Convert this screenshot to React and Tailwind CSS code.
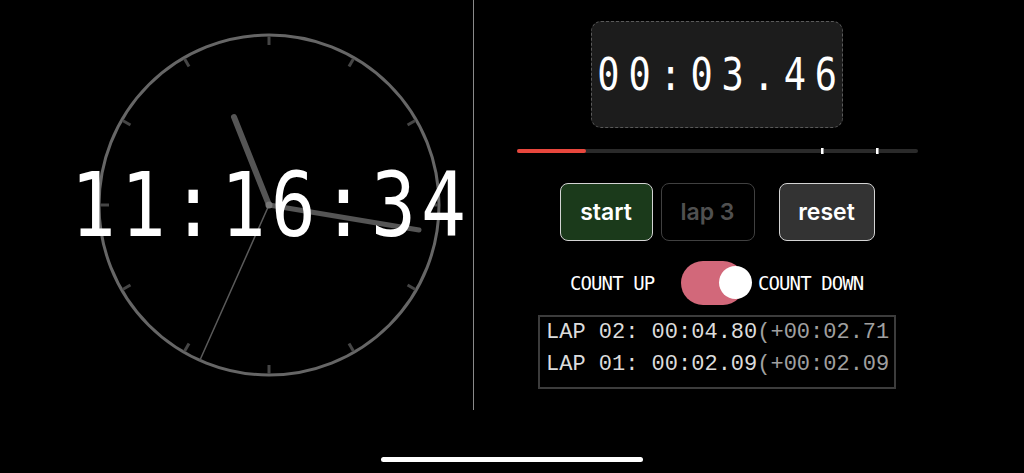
import React from "react";

function Clock() {
  const c = 172;
  const ticks = [];
  for (let i = 0; i < 12; i++) {
    const a = (i * 30 * Math.PI) / 180;
    ticks.push(
      <line
        key={i}
        x1={c + Math.sin(a) * 160}
        y1={c - Math.cos(a) * 160}
        x2={c + Math.sin(a) * 169}
        y2={c - Math.cos(a) * 169}
        stroke="#454545"
        strokeWidth="3"
      />
    );
  }
  return (
    <svg width="344" height="344" viewBox="0 0 344 344" className="col-start-1 row-start-1">
      <circle cx={c} cy={c} r="170" fill="none" stroke="#666" strokeWidth="3" />
      {ticks}
      <line x1={c} y1={c} x2={c - 35} y2={c - 88} stroke="#555" strokeWidth="6" strokeLinecap="round" />
      <line x1={c} y1={c} x2={c + 150} y2={c + 25} stroke="#555" strokeWidth="5" strokeLinecap="round" />
      <line x1={c} y1={c} x2={c - 69} y2={c + 155} stroke="#5a5a5a" strokeWidth="1.5" strokeLinecap="round" />
      <circle cx={c} cy={c} r="3.5" fill="#777" />
    </svg>
  );
}

export default function App() {
  const mono = { fontFamily: '"DejaVu Sans Mono", monospace' };
  return (
    <div className="relative w-[1024px] h-[473px] bg-black overflow-hidden flex">
      <div className="w-[474px] h-[410px] border-r border-[#8a8a8a] pl-[64px] flex items-center justify-center">
        <div className="grid place-items-center">
          <Clock />
          <div
            className="col-start-1 row-start-1 text-white text-[89px] leading-none tracking-[6px] pl-[6px] scale-x-[0.84] whitespace-nowrap"
            style={mono}
          >
            11:16:34
          </div>
        </div>
      </div>

      <div className="flex-1 pr-[64px] flex flex-col items-center">
        <div className="mt-[21px] w-[252px] h-[107px] rounded-[10px] border border-dashed border-[#5a5a5a] bg-[#1c1c1c] flex items-center justify-center">
          <div
            className="text-white text-[44px] leading-none tracking-[10.5px] pl-[10.5px] scale-x-[0.84] whitespace-nowrap"
            style={mono}
          >
            00:03.46
          </div>
        </div>

        <div className="relative mt-[21px] w-[401px] h-[4px] rounded-full bg-[#2a2a2a]">
          <div className="h-full w-[69px] rounded-full bg-[#e8473d]" />
          <div className="absolute left-[304px] top-[-1px] w-[3px] h-[6px] bg-white border-r border-[#999]" />
          <div className="absolute left-[359px] top-[-1px] w-[3px] h-[6px] bg-white border-r border-[#999]" />
        </div>

        <div className="mt-[30px] flex items-center" style={{ fontFamily: "Inter, sans-serif" }}>
          <button className="w-[93px] h-[58px] rounded-[8px] border-[1.5px] border-[#d4d4d4] bg-[#1b3a1b] text-white text-[23px] font-semibold">
            start
          </button>
          <button className="ml-[8px] w-[94px] h-[58px] rounded-[8px] border-[1.5px] border-[#404040] bg-black text-[#505050] text-[23px] font-semibold">
            lap 3
          </button>
          <button className="ml-[24px] w-[96px] h-[58px] rounded-[8px] border-[1.5px] border-[#d4d4d4] bg-[#333] text-white text-[23px] font-semibold">
            reset
          </button>
        </div>

        <div className="mt-[20px] h-[44px] flex items-center text-white text-[19px] tracking-[-0.9px]" style={mono}>
          <span className="w-[84px] whitespace-nowrap">COUNT UP</span>
          <div className="relative ml-[27px] w-[64px] h-[44px] rounded-full bg-[#d2687a]">
            <div className="absolute right-[-7px] top-[5px] w-[33px] h-[33px] rounded-full bg-white" />
          </div>
          <span className="ml-[13px] w-[106px] whitespace-nowrap">COUNT DOWN</span>
        </div>

        <div
          className="mt-[10px] w-[358px] h-[74px] border-2 border-[#3c3c3c] overflow-hidden pl-[6px] text-[22px] leading-[31.5px] whitespace-nowrap"
          style={{ fontFamily: '"Liberation Mono", monospace' }}
        >
          <div>
            <span className="text-[#dcdcdc]">LAP 02: 00:04.80</span>
            <span className="text-[#a0a0a0]">(+00:02.71</span>
          </div>
          <div>
            <span className="text-[#dcdcdc]">LAP 01: 00:02.09</span>
            <span className="text-[#a0a0a0]">(+00:02.09</span>
          </div>
        </div>
      </div>

      <div className="absolute left-[381px] top-[457px] w-[262px] h-[5px] rounded-full bg-white" />
    </div>
  );
}
